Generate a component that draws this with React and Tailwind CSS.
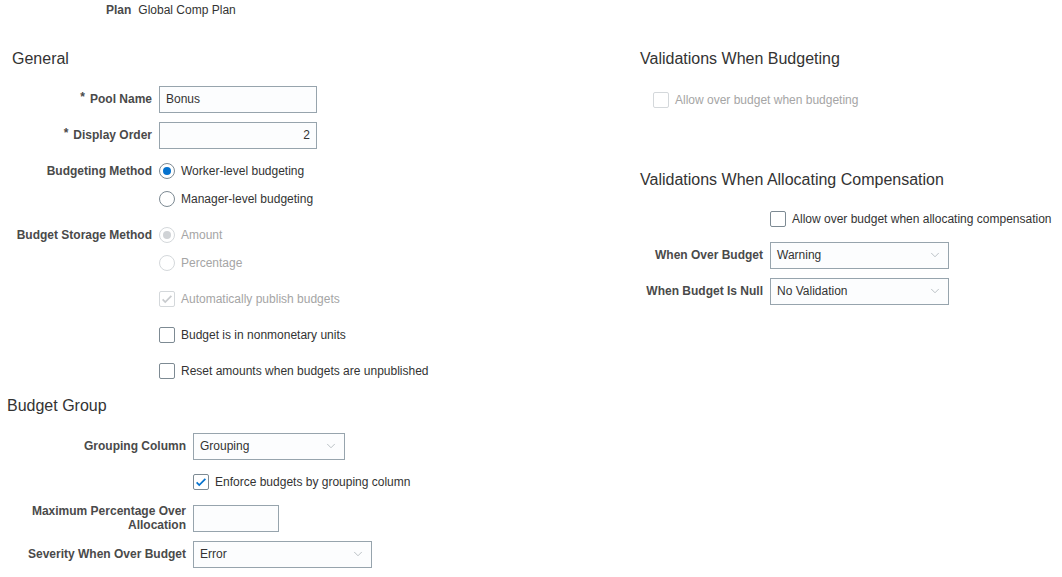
import { ChevronDown } from 'lucide-react';

const font = { fontFamily: '"Liberation Sans", Arial, sans-serif' };

function Label({ children, required }) {
  return (
    <span className="text-right text-[12px] font-bold leading-[14px] text-[#4a4a4a]">
      {required && <span className="mr-[5px] align-top text-[12px] leading-[10px]">*</span>}
      {children}
    </span>
  );
}

function TextInput({ value = '', width, right }) {
  return (
    <div
      className={`flex h-[27px] items-center border border-[#97a4ad] bg-[#fcfdfe] px-[6px] text-[12px] text-[#333] ${width} ${right ? 'justify-end' : ''}`}
    >
      {value}
    </div>
  );
}

function Select({ value, width }) {
  return (
    <div
      className={`flex h-[27px] items-center justify-between border border-[#97a4ad] bg-[#fcfdfe] pl-[6px] pr-[6px] text-[12px] text-[#333] ${width}`}
    >
      <span>{value}</span>
      <ChevronDown className="h-[14px] w-[14px] text-[#a3abb1]" strokeWidth={1.25} />
    </div>
  );
}

function Radio({ checked, disabled, children }) {
  return (
    <div className="flex h-[28px] items-center gap-[6px]">
      <span
        className={`flex h-[16px] w-[16px] items-center justify-center rounded-full border ${
          disabled ? 'border-[#d4d8db]' : 'border-[#7d8a93]'
        }`}
      >
        {checked && (
          <span
            className={`h-[8px] w-[8px] rounded-full ${disabled ? 'bg-[#d0d3d6]' : 'bg-[#0572ce]'}`}
          />
        )}
      </span>
      <span className={`text-[12px] ${disabled ? 'text-[#a5a5a5]' : 'text-[#333]'}`}>{children}</span>
    </div>
  );
}

function Checkbox({ checked, disabled, children }) {
  return (
    <div className="flex h-[28px] items-center gap-[6px]">
      <span
        className={`flex h-[16px] w-[16px] items-center justify-center rounded-[2px] border bg-white ${
          disabled ? 'border-[#d4d8db]' : 'border-[#7d8a93]'
        }`}
      >
        {checked && (
          <svg viewBox="0 0 16 16" className="h-[14px] w-[14px]">
            <path
              d="M3 8.5l3 3 7-7"
              fill="none"
              stroke={disabled ? '#c8cbce' : '#0572ce'}
              strokeWidth="2"
            />
          </svg>
        )}
      </span>
      <span className={`text-[12px] ${disabled ? 'text-[#a5a5a5]' : 'text-[#333]'}`}>{children}</span>
    </div>
  );
}

function Row({ label, required, labelW, children }) {
  return (
    <div className="flex items-start gap-[7px]">
      <div className={`flex h-[28px] shrink-0 items-center justify-end ${labelW}`}>
        {label && <Label required={required}>{label}</Label>}
      </div>
      <div className="flex flex-col">{children}</div>
    </div>
  );
}

function Heading({ children, className = '' }) {
  return <h2 className={`text-[16px] leading-[20px] text-[#333] ${className}`}>{children}</h2>;
}

export default function App() {
  return (
    <div className="h-[577px] w-[1062px] overflow-hidden bg-white" style={font}>
      <div className="flex h-[20px] items-center gap-[7px] pl-[106px] text-[12px]">
        <span className="font-bold text-[#4a4a4a]">Plan</span>
        <span className="text-[#333]">Global Comp Plan</span>
      </div>

      <div className="flex">
        <div className="w-[640px] shrink-0">
          <Heading className="mt-[29px] pl-[12px]">General</Heading>
          <div className="mt-[16px] flex flex-col gap-[8px]">
            <Row label="Pool Name" required labelW="w-[152px]">
              <div className="flex h-[28px] items-center">
                <TextInput value="Bonus" width="w-[158px]" />
              </div>
            </Row>
            <Row label="Display Order" required labelW="w-[152px]">
              <div className="flex h-[28px] items-center">
                <TextInput value="2" width="w-[158px]" right />
              </div>
            </Row>
            <Row label="Budgeting Method" labelW="w-[152px]">
              <Radio checked>Worker-level budgeting</Radio>
              <Radio>Manager-level budgeting</Radio>
            </Row>
            <Row label="Budget Storage Method" labelW="w-[152px]">
              <Radio checked disabled>Amount</Radio>
              <Radio disabled>Percentage</Radio>
            </Row>
            <Row labelW="w-[152px]">
              <Checkbox checked disabled>Automatically publish budgets</Checkbox>
            </Row>
            <Row labelW="w-[152px]">
              <Checkbox>Budget is in nonmonetary units</Checkbox>
            </Row>
            <Row labelW="w-[152px]">
              <Checkbox>Reset amounts when budgets are unpublished</Checkbox>
            </Row>
          </div>

          <Heading className="mt-[11px] pl-[7px]">Budget Group</Heading>
          <div className="mt-[16px] flex flex-col gap-[8px]">
            <Row label="Grouping Column" labelW="w-[186px]">
              <div className="flex h-[28px] items-center">
                <Select value="Grouping" width="w-[152px]" />
              </div>
            </Row>
            <Row labelW="w-[186px]">
              <Checkbox checked>Enforce budgets by grouping column</Checkbox>
            </Row>
            <Row label={<>Maximum Percentage Over<br />Allocation</>} labelW="w-[186px]">
              <div className="flex h-[28px] items-center">
                <TextInput width="w-[86px]" />
              </div>
            </Row>
            <Row label="Severity When Over Budget" labelW="w-[186px]">
              <div className="flex h-[28px] items-center">
                <Select value="Error" width="w-[179px]" />
              </div>
            </Row>
          </div>
        </div>

        <div className="flex-1">
          <Heading className="mt-[29px]">Validations When Budgeting</Heading>
          <div className="mt-[17px] pl-[13px]">
            <Checkbox disabled>Allow over budget when budgeting</Checkbox>
          </div>

          <Heading className="mt-[56px]">Validations When Allocating Compensation</Heading>
          <div className="mt-[15px] flex flex-col gap-[8px]">
            <Row labelW="w-[123px]">
              <Checkbox>Allow over budget when allocating compensation</Checkbox>
            </Row>
            <Row label="When Over Budget" labelW="w-[123px]">
              <div className="flex h-[28px] items-center">
                <Select value="Warning" width="w-[179px]" />
              </div>
            </Row>
            <Row label="When Budget Is Null" labelW="w-[123px]">
              <div className="flex h-[28px] items-center">
                <Select value="No Validation" width="w-[179px]" />
              </div>
            </Row>
          </div>
        </div>
      </div>
    </div>
  );
}
